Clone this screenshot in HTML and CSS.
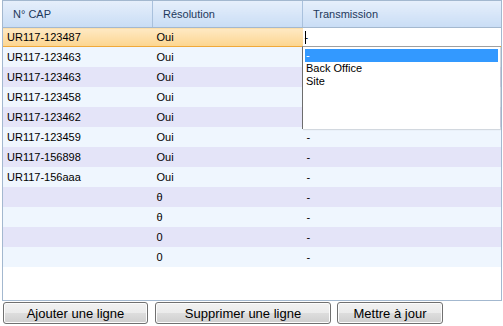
FILE: index.html
```html
<!DOCTYPE html>
<html lang="fr">
<head>
  <meta charset="UTF-8" />
  <title>Grille CAP</title>
  <link rel="stylesheet" href="styles.css">
</head>
<body>
  <div class="grid">
    <table class="cap-table">
      <thead>
        <tr>
          <th class="col-cap">N° CAP</th>
          <th class="col-res">Résolution</th>
          <th class="col-tr">Transmission</th>
        </tr>
      </thead>
      <tbody>
        <tr class="selected">
          <td>UR117-123487</td>
          <td>Oui</td>
          <td class="editing"><span class="edit-box"><span class="caret"></span>-</span></td>
        </tr>
        <tr><td>UR117-123463</td><td>Oui</td><td></td></tr>
        <tr class="alt"><td>UR117-123463</td><td>Oui</td><td></td></tr>
        <tr><td>UR117-123458</td><td>Oui</td><td></td></tr>
        <tr class="alt"><td>UR117-123462</td><td>Oui</td><td></td></tr>
        <tr><td>UR117-123459</td><td>Oui</td><td>-</td></tr>
        <tr class="alt"><td>UR117-156898</td><td>Oui</td><td>-</td></tr>
        <tr><td>UR117-156aaa</td><td>Oui</td><td>-</td></tr>
        <tr class="alt"><td></td><td>θ</td><td>-</td></tr>
        <tr><td></td><td>θ</td><td>-</td></tr>
        <tr class="alt"><td></td><td>0</td><td>-</td></tr>
        <tr><td></td><td>0</td><td>-</td></tr>
      </tbody>
    </table>

    <!-- liste déroulante de la cellule Transmission -->
    <ul class="dropdown">
      <li class="active">-</li>
      <li>Back Office</li>
      <li>Site</li>
    </ul>
  </div>

  <div class="actions">
    <button class="btn btn-add">Ajouter une ligne</button>
    <button class="btn btn-del">Supprimer une ligne</button>
    <button class="btn btn-upd">Mettre à jour</button>
  </div>
</body>
</html>
```

FILE: styles.css
```css
body {
  margin: 0;
  padding: 0 2px 0 2px;
  font-family: 'Liberation Sans', Arial, sans-serif;
  background: #fff;
  color: #000;
}

.grid {
  position: relative;
  width: 498px;
  height: 299px;
  border: 1px solid #a3b8cf;
  background: #fff;
}

.cap-table {
  width: 100%;
  border-collapse: collapse;
  table-layout: fixed;
  font-size: 11px;
}

.cap-table th {
  height: 26px;
  padding: 0 0 0 10px;
  text-align: left;
  font-weight: normal;
  color: #1e395b;
  background: linear-gradient(to bottom, #e6effb, #c9ddf5);
  border-left: 1px solid #f4f8fd;
  border-right: 1px solid #a9c1dd;
  border-bottom: 1px solid #a3b8cf;
}

.cap-table th.col-cap {
  width: 139px;
  border-left: none;
}

.cap-table th.col-res {
  width: 139px;
}

.cap-table th.col-tr {
  border-right: none;
}

.cap-table td {
  height: 20px;
  padding: 0 0 0 4px;
  white-space: nowrap;
  background: #eff6fe;
}

.cap-table tr.alt td {
  background: #e4e4f8;
}

.cap-table tr.selected td {
  height: 18px;
  background: linear-gradient(to bottom, #fee9c4, #fcd58f);
  border-top: 1px solid #f7c06b;
  border-bottom: 1px solid #f0a93a;
}

.cap-table tr.selected td.editing {
  padding: 0;
  background: #fff;
}

.edit-box {
  display: block;
  height: 18px;
  line-height: 18px;
  padding-left: 2px;
  background: #fff;
}

.caret {
  display: inline-block;
  width: 1px;
  height: 13px;
  margin-right: -1px;
  background: #000;
  vertical-align: -3px;
}

.dropdown {
  position: absolute;
  left: 299px;
  top: 45px;
  width: 193px;
  height: 80px;
  margin: 0;
  padding: 2px 2px 0 2px;
  list-style: none;
  font-size: 11px;
  background: #fff;
  border-left: 1px solid #6d6d6d;
  border-top: 1px solid #a0a0a0;
  box-shadow: 1px 1px 1px rgba(0, 0, 0, 0.12);
}

.dropdown li {
  height: 13px;
  line-height: 13px;
  padding-left: 1px;
}

.dropdown li.active {
  background: #3399ff;
  color: #fff;
}

.actions {
  display: flex;
  gap: 7px;
  padding: 1px 0 0 1px;
}

.btn {
  height: 22px;
  padding: 0;
  font-family: 'Liberation Sans', Arial, sans-serif;
  font-size: 13px;
  color: #000;
  border: 1px solid #707070;
  border-radius: 3px;
  background: linear-gradient(to bottom, #f2f2f2 0%, #ebebeb 50%, #dddddd 51%, #cfcfcf 100%);
  box-shadow: inset 0 0 0 1px #fcfcfc;
}

.btn-add { width: 145px; }
.btn-del { width: 176px; }
.btn-upd { width: 106px; margin-left: -1px; }
```
